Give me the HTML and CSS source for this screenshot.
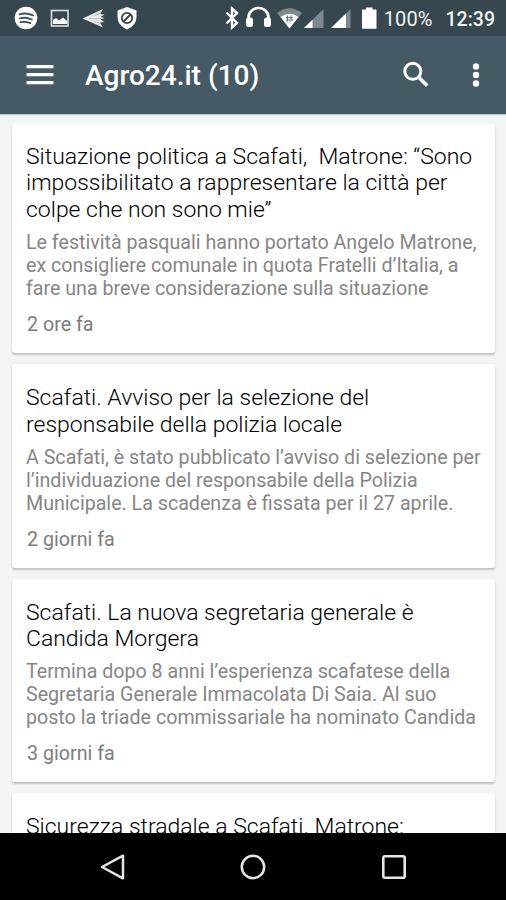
FILE: index.html
```html
<!DOCTYPE html>
<html lang="it">
<head>
<meta charset="utf-8">
<title>Agro24.it</title>
<link rel="stylesheet" href="styles.css">
</head>
<body>
<div class="screen">
  <div class="status">
    <svg class="status-icons" width="506" height="36" viewBox="0 0 506 36" aria-hidden="true">
      <circle cx="26" cy="18" r="11.3" fill="#fff"/>
      <path d="M19.5 14.3q7-2 13.5 1M20 18.4q6-1.600 11.800 1.100M20.600 22.200q5-1.200 9.700 1" fill="none" stroke="#43525a" stroke-width="1.900" stroke-linecap="round"/>
      <rect x="51.500" y="10.500" width="16.500" height="15.500" fill="none" stroke="#d4dadd" stroke-width="1.700"/>
      <path d="M53 24v-4l3-2 3 2.500 4-3 4 3.500v3z" fill="#fff"/>
      <path d="M82.500 18.500L103 9l-3 5 4.500.5-4 2.500 4 1-4 1.500 4 2.500-4.500.5 3 5z" fill="#e9edee"/>
      <path d="M89 18.500h12M94 16l7-3M94 21l7 3" stroke="#a8b2b7" stroke-width=".8"/>
      <path d="M127 7l9.500 3.500v6.500q0 8.500-9.500 12.500q-9.500-4-9.500-12.500v-6.500z" fill="#fff"/>
      <circle cx="127" cy="18" r="5.200" fill="none" stroke="#35444b" stroke-width="1.800"/>
      <path d="M123.500 21.500l7-7" stroke="#35444b" stroke-width="1.800"/>
      <path d="M226.500 12.500l10.500 10.500-5 4.500V8.500l5 4.500-10.500 10.500" fill="none" stroke="#fff" stroke-width="2.400"/>
      <path d="M248.500 20v-2.500a10 9.500 0 0 1 20 0V20" fill="none" stroke="#fff" stroke-width="2.700"/>
      <rect x="246" y="17.500" width="7" height="9.500" rx="2.500" fill="#fff"/><rect x="264" y="17.500" width="7" height="9.500" rx="2.500" fill="#fff"/>
      <path d="M277 13q12.500-9.500 25 0L289.500 28.500z" fill="#7c898f"/>
      <path d="M280.500 17q9-6.500 18 0L289.500 28.500z" fill="#fff"/>
      <path d="M286 17.500h7M286 20h7M287.500 15.500v6M291 15.500v6" stroke="#68777e" stroke-width="1"/>
      <path d="M304 28L323.500 9v19z" fill="#7c898f"/><path d="M304 28l8.500-8.300V28z" fill="#fff"/>
      <path d="M331 28L350.500 9v19z" fill="#7c898f"/><path d="M331 28l15-14.600V28z" fill="#fff"/>
      <path d="M362.500 9.500h3.500V7.500h6.500v2h3.500q.5 0 .5.500v18q0 .7-.7.700h-13.100q-.7 0-.7-.7V10q0-.5.500-.5z" fill="#fff"/>
    </svg>
    <span class="battery">100%</span>
    <span class="clock">12:39</span>
  </div>
  <header class="bar">
    <svg class="menu" width="28" height="20" viewBox="0 0 28 20"><path d="M.5 1.700h27M.5 9.700h27M.5 17.700h27" stroke="#fff" stroke-width="3.200"/></svg>
    <h1>Agro24.it (10)</h1>
    <svg class="search" width="28" height="28" viewBox="0 0 28 28"><circle cx="10.800" cy="10.300" r="8" fill="none" stroke="#fff" stroke-width="3"/><path d="M16.500 16l8.700 8.700" stroke="#fff" stroke-width="3.600"/></svg>
    <svg class="more" width="8" height="26" viewBox="0 0 8 26"><circle cx="4" cy="4.500" r="3.200" fill="#fff"/><circle cx="4" cy="13" r="3.200" fill="#fff"/><circle cx="4" cy="21.500" r="3.200" fill="#fff"/></svg>
  </header>
  <main class="feed">
    <article class="card">
      <h2>Situazione politica a Scafati,&nbsp; Matrone: “Sono<br>impossibilitato a rappresentare la città per<br>colpe che non sono mie”</h2>
      <p>Le festività pasquali hanno portato Angelo Matrone,<br>ex consigliere comunale in quota Fratelli d’Italia, a<br>fare una breve considerazione sulla situazione</p>
      <time>2 ore fa</time>
    </article>
    <article class="card">
      <h2>Scafati. Avviso per la selezione del<br>responsabile della polizia locale</h2>
      <p>A Scafati, è stato pubblicato l’avviso di selezione per<br>l’individuazione del responsabile della Polizia<br>Municipale. La scadenza è fissata per il 27 aprile.</p>
      <time>2 giorni fa</time>
    </article>
    <article class="card">
      <h2>Scafati. La nuova segretaria generale è<br>Candida Morgera</h2>
      <p>Termina dopo 8 anni l’esperienza scafatese della<br>Segretaria Generale Immacolata Di Saia. Al suo<br>posto la triade commissariale ha nominato Candida</p>
      <time>3 giorni fa</time>
    </article>
    <article class="card">
      <h2>Sicurezza stradale a Scafati. Matrone:</h2>
    </article>
  </main>
  <nav class="nav">
    <svg width="26" height="28" viewBox="0 0 26 28"><path d="M2 14L23 2.700v22.600z" fill="none" stroke="#e6e6e6" stroke-width="2.500" stroke-linejoin="round"/></svg>
    <svg width="26" height="28" viewBox="0 0 26 28"><circle cx="13" cy="14" r="11.200" fill="none" stroke="#e6e6e6" stroke-width="2.500"/></svg>
    <svg width="26" height="28" viewBox="0 0 26 28"><rect x="2.300" y="3.300" width="21.400" height="21.400" rx="1.500" fill="none" stroke="#e6e6e6" stroke-width="2.600"/></svg>
  </nav>
</div>
</body>
</html>
```
FILE: styles.css
```css
* { box-sizing: border-box; }
body { margin: 0; font-family: Roboto, "Liberation Sans", sans-serif; }
.screen { width: 506px; height: 900px; display: flex; flex-direction: column; overflow: hidden; background: #f4f4f4; }
.status { position: relative; flex: none; height: 36px; background: #37474f; color: #f2f4f5; display: flex; justify-content: flex-end; align-items: center; gap: 13px; padding: 2px 11px 0 0; font-size: 20px; line-height: 24px; white-space: nowrap; }
.status-icons { position: absolute; left: 0; top: 0; }
.battery { letter-spacing: .1px; }
.clock { font-weight: 500; font-size: 19.500px; line-height: 24px; margin-top: 2px; }
.bar { flex: none; height: 78px; background: #455a64; display: flex; align-items: center; padding: 0 26px; color: #fff; box-shadow: 0 1px 1px #bfc7cb; }
.bar h1 { flex: 1; margin: 2px 0 0 31px; font-size: 28px; line-height: 34px; font-weight: 500; white-space: nowrap; }
.search { margin-right: 42px; }
.feed { flex: 1; min-height: 0; overflow: hidden; padding: 9px 11px 0 12px; display: flex; flex-direction: column; gap: 11px; }
.card { flex: none; background: #fff; border-radius: 3px; box-shadow: 0 2px 2px rgba(0,0,0,.2), 0 0 2px rgba(0,0,0,.07); padding: 20.700px 0 15.300px 14px; white-space: nowrap; }
.card h2 { margin: 0; font-size: 22.980px; line-height: 26.700px; font-weight: 300; color: #000; }
.card p { margin: 7.200px 0 12px; font-size: 19.650px; line-height: 23px; color: #868686; }
.card time { display: block; margin-left: 1px; font-size: 19.700px; line-height: 26px; color: #7c7c7c; }
.nav { flex: none; height: 67px; background: #000; display: flex; justify-content: center; align-items: center; gap: 114.500px; }
```
